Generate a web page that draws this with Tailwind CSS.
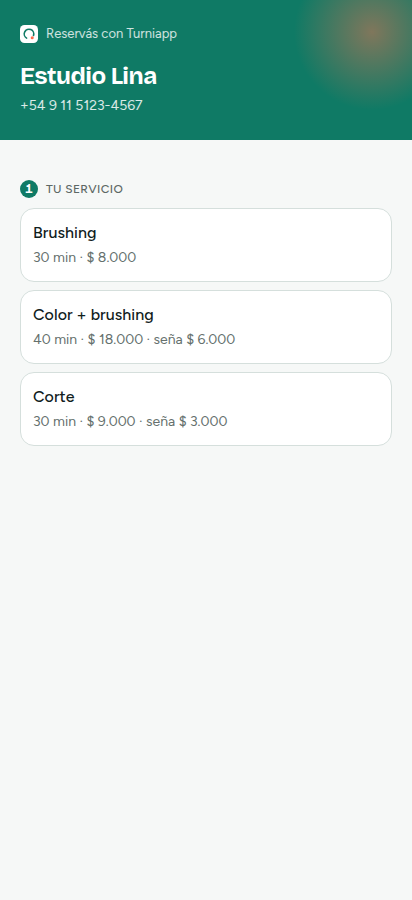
<!DOCTYPE html>
<html lang="es">
<head>
<meta charset="utf-8">
<meta name="viewport" content="width=device-width, initial-scale=1">
<title>Estudio Lina</title>
<script src="https://cdn.jsdelivr.net/npm/@tailwindcss/browser@4"></script>
</head>
<body class="min-h-screen bg-[#f6f8f7] font-['Figtree','Inter',sans-serif] text-[#10201c]">
<header class="h-[140px] bg-[#0f7a65] bg-[radial-gradient(circle_at_372px_32px,rgba(255,115,81,0.47),rgba(255,115,81,0)_78px)] px-5 pt-6 text-white">
  <div class="flex h-5 items-center gap-2">
    <svg class="size-[18px]" viewBox="0 0 18 18" fill="none">
      <rect width="18" height="18" rx="4.5" fill="white"/>
      <path d="M6.6 13.1A4.75 4.75 0 1 1 13.5 10.5" stroke="#0f7a65" stroke-width="1.6" stroke-linecap="round"/>
      <circle cx="12.2" cy="12.8" r="1.5" fill="#ff6b4a"/>
    </svg>
    <span class="whitespace-nowrap text-[13px] leading-5 tracking-[0.01px] text-white/80">Reservás con Turniapp</span>
  </div>
  <h1 class="mt-4 whitespace-nowrap font-['Bricolage_Grotesque','Figtree','Inter',sans-serif] text-[24px] font-bold leading-8 tracking-[-0.48px]">Estudio Lina</h1>
  <p class="mt-[3px] whitespace-nowrap text-[14px] leading-[21px] text-white/85">+54 9 11 5123-4567</p>
</header>
<main class="px-5 pt-10">
  <div class="flex h-[18px] items-center gap-2">
    <span class="flex size-[18px] items-center justify-center rounded-full bg-[#0f7a65] font-['Bricolage_Grotesque','Figtree','Inter',sans-serif] text-[12px] font-bold leading-none tabular-nums text-white">1</span>
    <h2 class="whitespace-nowrap text-[12px] font-medium leading-[18px] tracking-[0.36px] text-[#5d6865]">TU SERVICIO</h2>
  </div>
  <div class="mt-2.5 flex flex-col gap-2">
    <button class="h-[74px] rounded-[14px] border border-[#d5dfdc] bg-white px-3 text-left">
      <span class="block text-[16px] font-[550] leading-6 tracking-[0.06px]">Brushing</span>
      <span class="mt-0.5 block text-[14px] leading-[22px] text-[#65706d]">30 min · $ 8.000</span>
    </button>
    <button class="h-[74px] rounded-[14px] border border-[#d5dfdc] bg-white px-3 text-left">
      <span class="block text-[16px] font-[550] leading-6 tracking-[0.06px]">Color + brushing</span>
      <span class="mt-0.5 block text-[14px] leading-[22px] text-[#65706d]">40 min · $ 18.000 · seña $ 6.000</span>
    </button>
    <button class="h-[74px] rounded-[14px] border border-[#d5dfdc] bg-white px-3 text-left">
      <span class="block text-[16px] font-[550] leading-6 tracking-[0.06px]">Corte</span>
      <span class="mt-0.5 block text-[14px] leading-[22px] text-[#65706d]">30 min · $ 9.000 · seña $ 3.000</span>
    </button>
  </div>
</main>
</body>
</html>
